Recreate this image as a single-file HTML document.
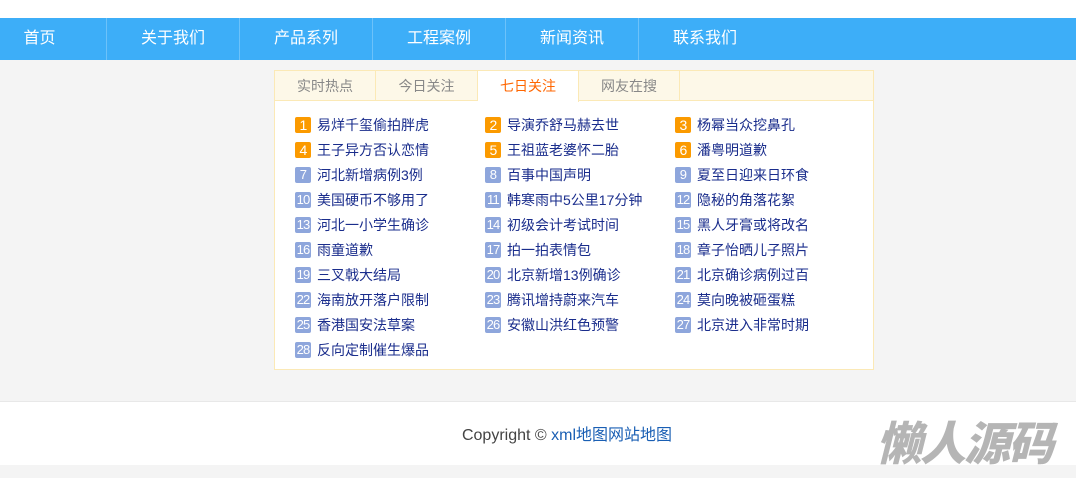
<!DOCTYPE html>
<html><head><meta charset="utf-8"><style>
*{margin:0;padding:0;box-sizing:border-box}
body{width:1076px;height:478px;background:#f4f4f4;font-family:"Liberation Sans","Noto Sans CJK SC",sans-serif;position:relative;overflow:hidden}
.top{height:18px;background:#fff}
.nav{height:42px;background:#3daef8;position:relative}
.nav span{position:absolute;top:0;height:42px;line-height:42px;color:#fff;font-size:16px;text-align:center;width:133px;border-left:1px solid #6cc2fa}
.box{position:absolute;left:274px;top:70px;width:600px;height:300px;background:#fff;border:1px solid #fbe9b6}
.tabs{height:30px;background:#fdf8e8;border-bottom:1px solid #fbe9b6;position:relative}
.tabs span{position:absolute;top:0;height:30px;line-height:30px;text-align:center;font-size:14px;color:#888;border-right:1px solid #fbe9b6}
.tabs span.on{background:#fff;color:#f60;height:31px}
.it{position:absolute;font-size:14px;color:#1a2d8c;height:16px;line-height:16px;white-space:nowrap}
.it b{display:inline-block;width:16px;height:16px;border-radius:2px;background:#8ea6dc;color:#fff;font-weight:normal;text-align:center;font-size:13px;margin-right:6px;vertical-align:top;letter-spacing:-0.8px;overflow:hidden}
.it b.h{background:#fb9a00;font-size:14px}
.foot{position:absolute;left:0;top:401px;width:1076px;height:64px;background:#fff;border-top:1px solid #e8e8e8}
.copy{position:absolute;left:0;width:1134px;text-align:center;top:19px;font-size:16px;color:#444}
.copy a{color:#1a5fb4;text-decoration:none}
.wm{position:absolute;left:876px;top:411px;font-size:46px;font-weight:900;font-style:italic;color:#b5b5b5;letter-spacing:-2px;font-family:"Noto Sans CJK SC",sans-serif;line-height:60px}
</style></head><body>
<div class="top"></div>
<div class="nav">
<span style="left:-27px;border-left:none">首页</span>
<span style="left:106px">关于我们</span>
<span style="left:239px">产品系列</span>
<span style="left:372px">工程案例</span>
<span style="left:505px">新闻资讯</span>
<span style="left:638px">联系我们</span>
</div>
<div class="box">
<div class="tabs">
<span style="left:0;width:101px">实时热点</span>
<span style="left:101px;width:102px">今日关注</span>
<span class="on" style="left:203px;width:101px">七日关注</span>
<span style="left:304px;width:101px">网友在搜</span>
</div>
</div>
<div id="l"></div>
<script>
var t=["易烊千玺偷拍胖虎","导演乔舒马赫去世","杨幂当众挖鼻孔","王子异方否认恋情","王祖蓝老婆怀二胎","潘粤明道歉","河北新增病例3例","百事中国声明","夏至日迎来日环食","美国硬币不够用了","韩寒雨中5公里17分钟","隐秘的角落花絮","河北一小学生确诊","初级会计考试时间","黑人牙膏或将改名","雨童道歉","拍一拍表情包","章子怡晒儿子照片","三叉戟大结局","北京新增13例确诊","北京确诊病例过百","海南放开落户限制","腾讯增持蔚来汽车","莫向晚被砸蛋糕","香港国安法草案","安徽山洪红色预警","北京进入非常时期","反向定制催生爆品"];
var h="";for(var i=0;i<t.length;i++){var c=i%3,r=Math.floor(i/3);h+='<div class="it" style="left:'+(295+c*190)+'px;top:'+(117+r*25)+'px"><b'+(i<6?' class="h"':'')+'>'+(i+1)+'</b>'+t[i]+'</div>';}
document.getElementById('l').innerHTML=h;
</script>
<div class="foot"><div class="copy">Copyright © <a>xml地图</a><a>网站地图</a></div></div>
<div class="wm">懒人源码</div>
</body></html>
